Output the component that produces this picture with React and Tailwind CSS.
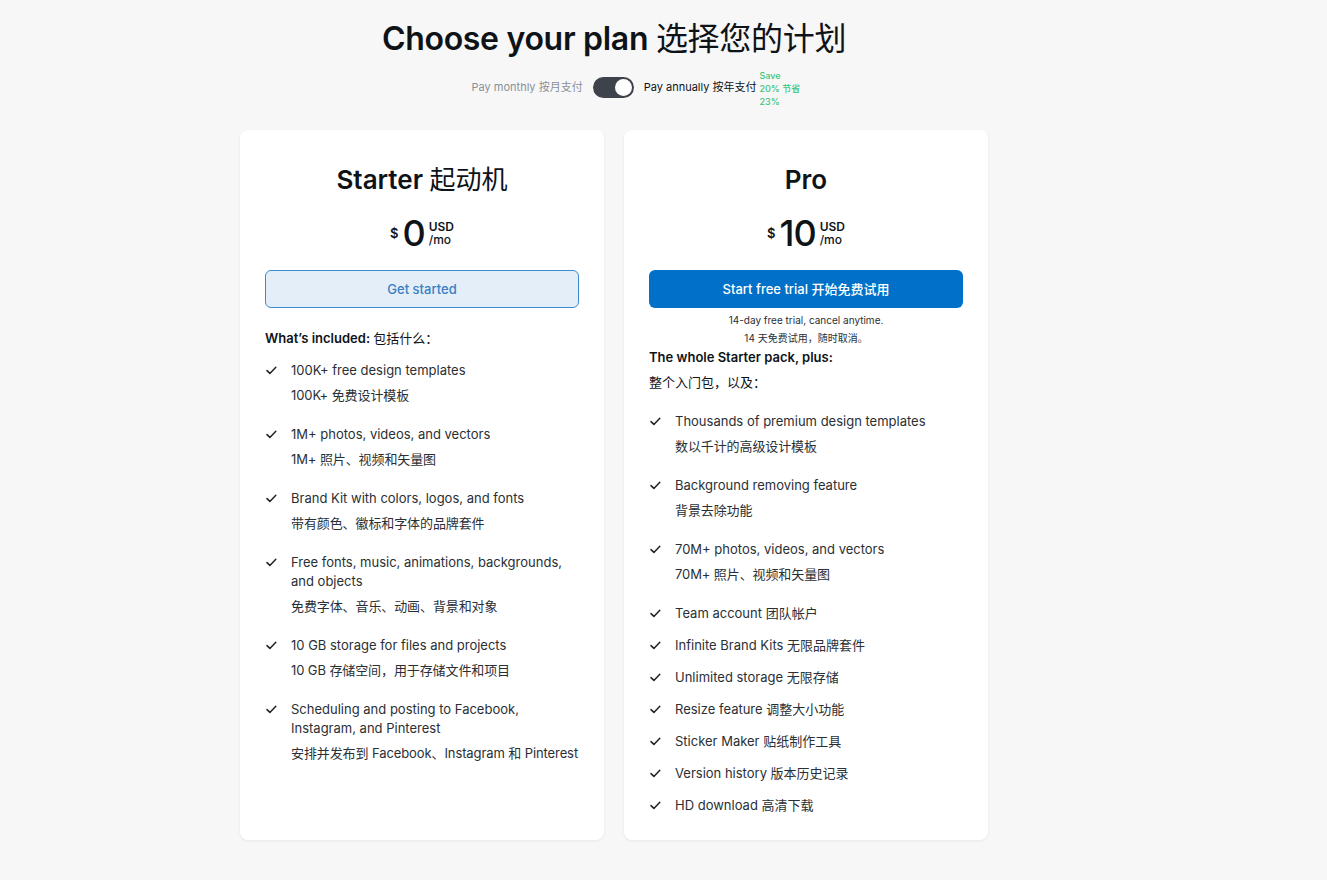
import React from 'react';

const starterFeatures = [
  { en: '100K+ free design templates', zh: '100K+ 免费设计模板' },
  { en: '1M+ photos, videos, and vectors', zh: '1M+ 照片、视频和矢量图' },
  { en: 'Brand Kit with colors, logos, and fonts', zh: '带有颜色、徽标和字体的品牌套件' },
  { en: 'Free fonts, music, animations, backgrounds, and objects', zh: '免费字体、音乐、动画、背景和对象' },
  { en: '10 GB storage for files and projects', zh: '10 GB 存储空间，用于存储文件和项目' },
  { en: 'Scheduling and posting to Facebook, Instagram, and Pinterest', zh: '安排并发布到 Facebook、Instagram 和 Pinterest' },
];

const proFeatures = [
  { en: 'Thousands of premium design templates', zh: '数以千计的高级设计模板' },
  { en: 'Background removing feature', zh: '背景去除功能' },
  { en: '70M+ photos, videos, and vectors', zh: '70M+ 照片、视频和矢量图' },
  { en: 'Team account 团队帐户' },
  { en: 'Infinite Brand Kits 无限品牌套件' },
  { en: 'Unlimited storage 无限存储' },
  { en: 'Resize feature 调整大小功能' },
  { en: 'Sticker Maker 贴纸制作工具' },
  { en: 'Version history 版本历史记录' },
  { en: 'HD download 高清下载' },
];

function Check() {
  return (
    <svg width="11" height="9" viewBox="0 0 11 9" className="mt-[5px] ml-[1px] shrink-0">
      <path d="M1 4.6 L3.9 7.4 L9.8 1.2" fill="none" stroke="#1f2328" strokeWidth="1.5" strokeLinecap="round" strokeLinejoin="round" />
    </svg>
  );
}

function FeatureList({ items }) {
  return (
    <ul className="flex flex-col gap-[13px]">
      {items.map((f, i) => (
        <li key={i} className="flex">
          <div className="w-[26px] shrink-0"><Check /></div>
          <div className="text-[13px] text-[#2a2f35]">
            <p className="leading-[19px]">{f.en}</p>
            {f.zh && <p className="mt-[6px] mb-[7px] whitespace-nowrap tracking-[-0.1px] leading-[19px]">{f.zh}</p>}
          </div>
        </li>
      ))}
    </ul>
  );
}

function Price({ amount }) {
  return (
    <div className="mt-[17px] flex h-[40px] items-center justify-center text-[#0e1318]">
      <span className="mr-[4px] mt-[2px] text-[13px] font-semibold">$</span>
      <span className="text-[36px] font-medium leading-[40px] tracking-[-1px]">{amount}</span>
      <span className="ml-[4px] flex flex-col text-[12px] font-semibold leading-[13px]">
        <span>USD</span>
        <span className="font-medium">/mo</span>
      </span>
    </div>
  );
}

export default function App() {
  return (
    <div className="min-h-[880px] bg-[#f7f7f7] font-['Inter','Noto_Sans_CJK_SC',sans-serif] text-[#0e1318]">
      <div className="flex w-[1228px] flex-col items-center pt-[19px]">
        <h1 className="text-[32px] font-semibold leading-[40px] tracking-[-0.3px]">
          Choose your plan <span className="font-normal">选择您的计划</span>
        </h1>

        <div className="mt-[18px] flex h-[21px] items-center text-[11px]">
          <span className="text-[#8b9098]">Pay monthly 按月支付</span>
          <button className="mx-[10px] flex h-[21px] w-[41px] items-center justify-end rounded-full bg-[#3e424b] px-[2px]">
            <span className="h-[17px] w-[17px] rounded-full bg-white" />
          </button>
          <span className="relative text-[#0e1318]">
            Pay annually 按年支付
            <span className="absolute left-full top-1/2 ml-[3px] flex w-[44px] -translate-y-1/2 flex-col text-[9px] font-medium leading-[13px] text-[#3cc47c]">
              <span>Save</span>
              <span className="whitespace-nowrap">20% 节省</span>
              <span>23%</span>
            </span>
          </span>
        </div>

        <div className="mt-[32px] flex gap-[20px]">
          {/* STARTER */}
          <div className="h-[710px] w-[364px] rounded-lg bg-white px-[25px] pt-[34px] shadow-[0_1px_3px_rgba(0,0,0,0.07)]">
            <h2 className="text-center text-[26px] font-semibold leading-[32px]">
              Starter <span className="font-normal">起动机</span>
            </h2>
            <Price amount="0" />
            <button className="mt-[17px] h-[38px] w-full rounded-md border border-[#3d8ad0] bg-[#e3eef8] pt-[2px] text-[13px] font-medium text-[#3a7fc2]">
              Get started
            </button>
            <p className="mt-[21px] text-[13px] font-semibold leading-[19px]">
              What’s included: <span className="font-normal">包括什么：</span>
            </p>
            <div className="mt-[13px]">
              <FeatureList items={starterFeatures} />
            </div>
          </div>

          {/* PRO */}
          <div className="h-[710px] w-[364px] rounded-lg bg-white px-[25px] pt-[34px] shadow-[0_1px_3px_rgba(0,0,0,0.07)]">
            <h2 className="text-center text-[26px] font-semibold leading-[32px]">Pro</h2>
            <Price amount="10" />
            <button className="mt-[17px] h-[38px] w-full rounded-md bg-[#0070c8] pt-[2px] text-[13px] font-medium text-white">
              Start free trial 开始免费试用
            </button>
            <div className="mt-[3px] text-center text-[10px] leading-[18px] text-[#2a2f35]">
              <p>14-day free trial, cancel anytime.</p>
              <p>14 天免费试用，随时取消。</p>
            </div>
            <p className="mt-[1px] text-[13px] font-semibold leading-[19px]">The whole Starter pack, plus:</p>
            <p className="mt-[6px] text-[13px] leading-[19px]">整个入门包，以及：</p>
            <div className="mt-[20px]">
              <FeatureList items={proFeatures} />
            </div>
          </div>
        </div>
      </div>
    </div>
  );
}
